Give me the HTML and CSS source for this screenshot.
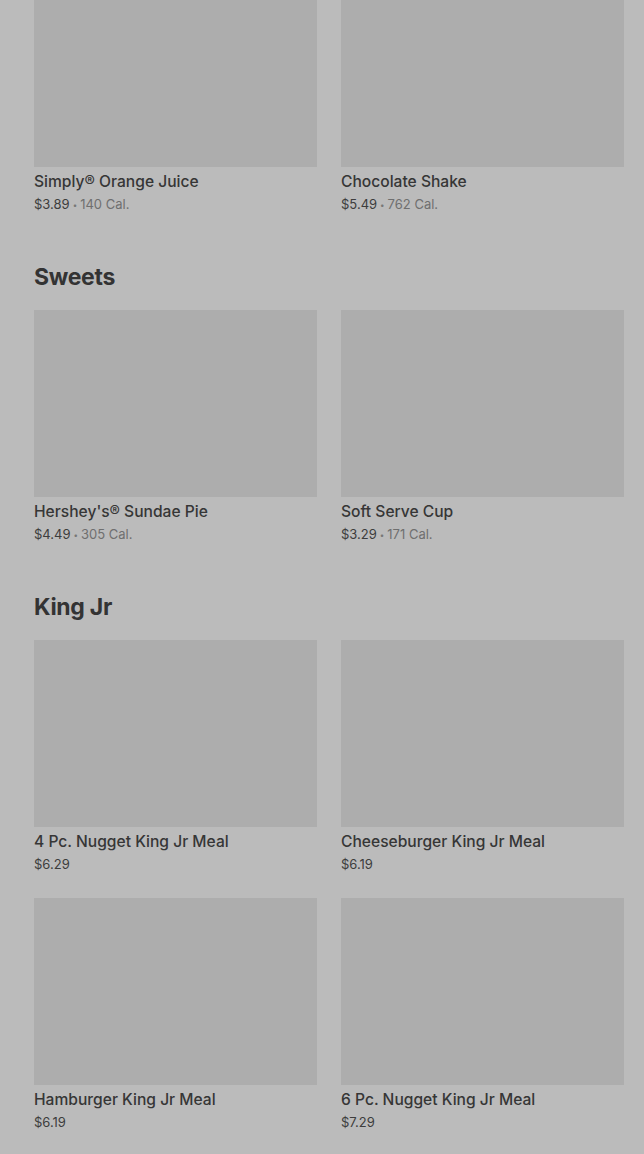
FILE: index.html
```html
<!DOCTYPE html>
<html lang="en">
<head>
  <meta charset="UTF-8" />
  <meta name="viewport" content="width=device-width, initial-scale=1" />
  <title>Menu</title>
  <link rel="stylesheet" href="styles.css">
</head>
<body>
  <div class="menu">
    <section class="section first">
      <div class="grid">
        <div class="item">
          <div class="thumb"></div>
          <div class="name">Simply® Orange Juice</div>
          <div class="meta">$3.89<span class="dot">•</span><span class="cal">140 Cal.</span></div>
        </div>
        <div class="item">
          <div class="thumb"></div>
          <div class="name">Chocolate Shake</div>
          <div class="meta">$5.49<span class="dot">•</span><span class="cal">762 Cal.</span></div>
        </div>
      </div>
    </section>

    <section class="section">
      <h3>Sweets</h3>
      <div class="grid">
        <div class="item">
          <div class="thumb"></div>
          <div class="name">Hershey's® Sundae Pie</div>
          <div class="meta">$4.49<span class="dot">•</span><span class="cal">305 Cal.</span></div>
        </div>
        <div class="item">
          <div class="thumb"></div>
          <div class="name">Soft Serve Cup</div>
          <div class="meta">$3.29<span class="dot">•</span><span class="cal">171 Cal.</span></div>
        </div>
      </div>
    </section>

    <section class="section">
      <h3>King Jr</h3>
      <div class="grid">
        <div class="item">
          <div class="thumb"></div>
          <div class="name">4 Pc. Nugget King Jr Meal</div>
          <div class="meta">$6.29</div>
        </div>
        <div class="item">
          <div class="thumb"></div>
          <div class="name">Cheeseburger King Jr Meal</div>
          <div class="meta">$6.19</div>
        </div>
        <div class="item">
          <div class="thumb"></div>
          <div class="name">Hamburger King Jr Meal</div>
          <div class="meta">$6.19</div>
        </div>
        <div class="item">
          <div class="thumb"></div>
          <div class="name">6 Pc. Nugget King Jr Meal</div>
          <div class="meta">$7.29</div>
        </div>
      </div>
    </section>
  </div>
</body>
</html>
```
FILE: styles.css
```css
* {
  box-sizing: border-box;
}
body {
  margin: 0;
  background: #bbbbbb;
  font-family: 'Inter', 'Noto Sans', sans-serif;
  color: #333;
  overflow: hidden;
}
.menu {
  padding: 0 20px 0 34px;
}
.section {
  padding-top: 48px;
}
.section.first {
  padding-top: 0;
  margin-top: -20px;
}
h3 {
  margin: 0 0 19px;
  font-size: 23px;
  line-height: 28px;
  font-weight: 700;
  color: #333;
  letter-spacing: -0.3px;
}
.grid {
  display: grid;
  grid-template-columns: 1fr 1fr;
  column-gap: 24px;
  row-gap: 24px;
}
.thumb {
  height: 187px;
  background: #adadad;
}
.name {
  margin-top: 5px;
  font-size: 15.6px;
  line-height: 20px;
  font-weight: 500;
  color: #363636;
}
.meta {
  margin-top: 2px;
  font-size: 13px;
  line-height: 20px;
  color: #3d3d3d;
}
.dot {
  margin: 0 3px;
  font-size: 8px;
  color: #777;
  vertical-align: 1px;
}
.cal {
  color: #6f6f6f;
}
```
